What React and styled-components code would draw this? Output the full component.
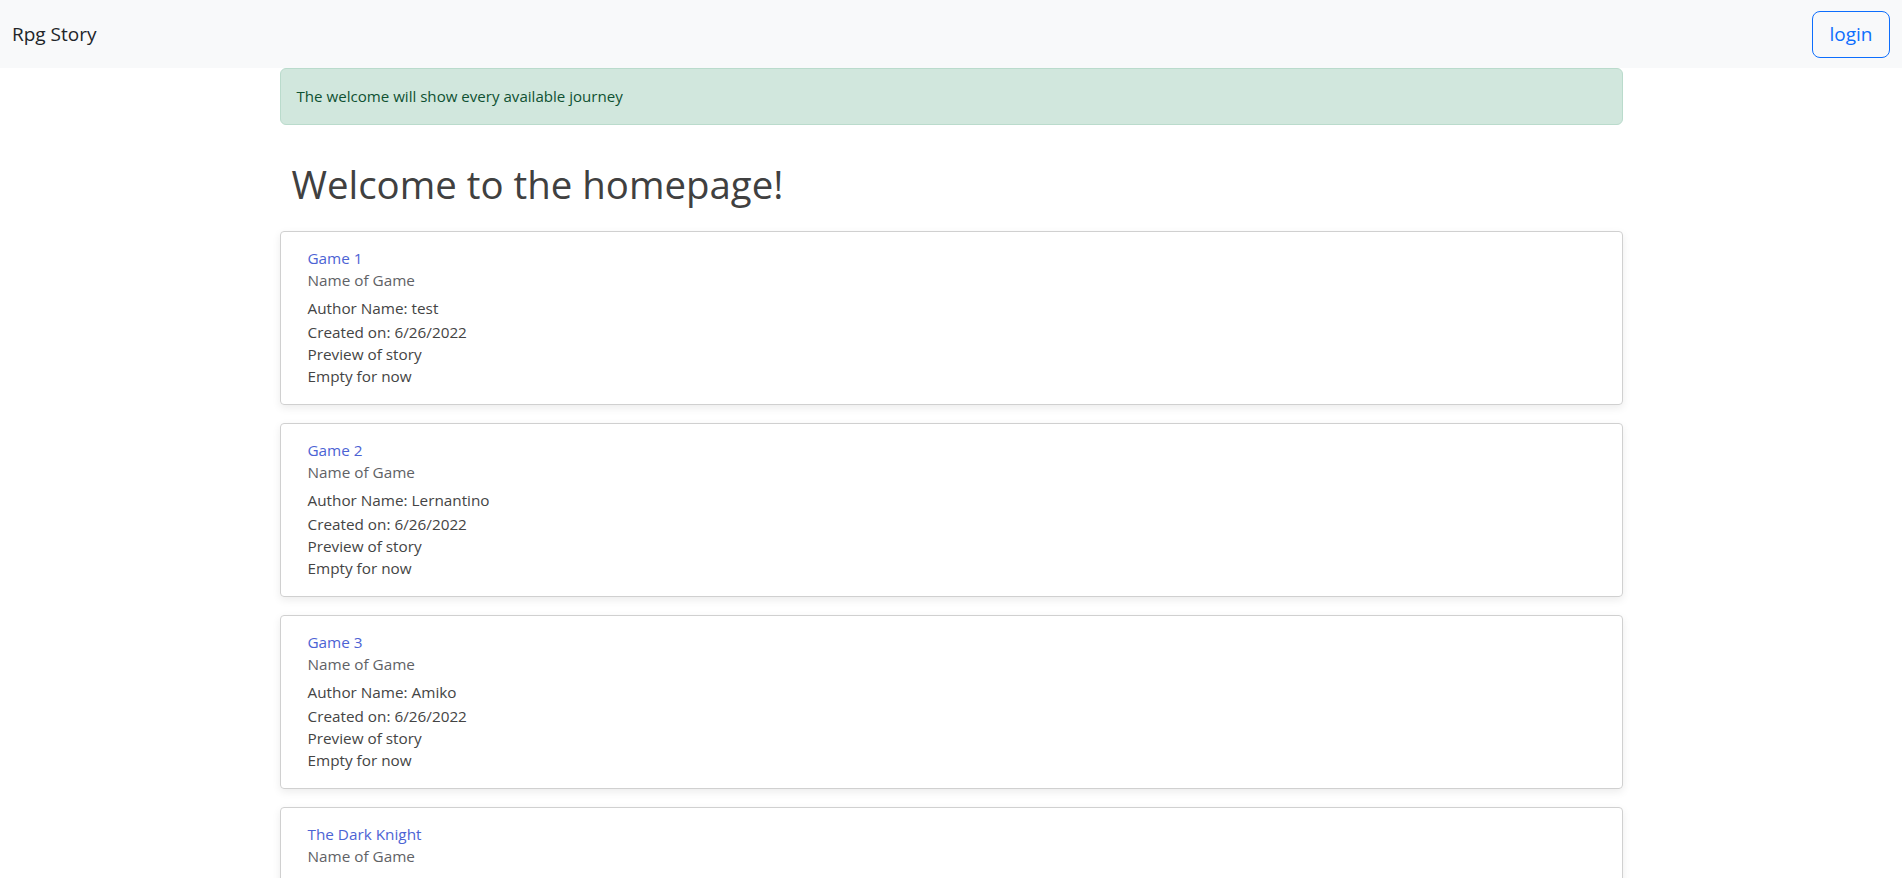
import React from 'react';
import styled, { createGlobalStyle } from 'styled-components';

const GlobalStyle = createGlobalStyle`
  body {
    margin: 0;
    background: #ffffff;
    font-family: "Open Sans", "Noto Sans", Arial, sans-serif;
    color: #444444;
  }
`;

/**
 *  Styled Components
 */
const NavBar = styled.nav`
  height: 68px;
  background: #f8f9fa;
  display: flex;
  align-items: center;
  justify-content: space-between;
  padding: 0 12px;
  box-sizing: border-box;
`;

const Brand = styled.span`
  font-size: 19px;
  color: #212529;
`;

const LoginButton = styled.button`
  width: 78px;
  height: 47px;
  font-family: inherit;
  font-size: 19px;
  color: #0d6efd;
  background: transparent;
  border: 1px solid #0d6efd;
  border-radius: 8px;
  cursor: pointer;
`;

const Container = styled.main`
  width: 1343px;
  margin: 0 auto;
`;

const Alert = styled.div`
  background: #d1e7dd;
  border: 1px solid #badbcc;
  border-radius: 6px;
  color: #0f5132;
  font-size: 15.1px;
  padding: 16px 16px;
  line-height: 23px;
`;

const Heading = styled.h1`
  font-size: 38.4px;
  font-weight: 400;
  color: #404040;
  margin: 35px 0 23px 12px;
  line-height: 48px;
`;

const CardList = styled.div`
  display: flex;
  flex-direction: column;
  gap: 18px;
`;

const Card = styled.div`
  border: 1px solid #d0d0d0;
  border-radius: 4px;
  box-shadow: 0 3px 8px rgba(0, 0, 0, 0.08);
  padding: 15px 27px 17px;
  font-size: 15.3px;
  line-height: 22px;
`;

const CardTitle = styled.div`
  color: #4c63d4;
`;

const CardSubtitle = styled.div`
  color: #5f6266;
  margin-bottom: 6px;
`;

const CardLine = styled.div`
  color: #444444;
  margin-bottom: ${props => (props.spaced ? '2px' : '0')};
`;

const games = [
  { title: 'Game 1', author: 'test' },
  { title: 'Game 2', author: 'Lernantino' },
  { title: 'Game 3', author: 'Amiko' },
  { title: 'The Dark Knight', author: 'Batman' },
];

function GameCard({ game }) {
  return (
    <Card>
      <CardTitle>{game.title}</CardTitle>
      <CardSubtitle>Name of Game</CardSubtitle>
      <CardLine spaced>Author Name: {game.author}</CardLine>
      <CardLine>Created on: 6/26/2022</CardLine>
      <CardLine>Preview of story</CardLine>
      <CardLine>Empty for now</CardLine>
    </Card>
  );
}

export default function App() {
  return (
    <>
      <GlobalStyle />
      <NavBar>
        <Brand>Rpg Story</Brand>
        <LoginButton>login</LoginButton>
      </NavBar>
      <Container>
        <Alert>The welcome will show every available journey</Alert>
        <Heading>Welcome to the homepage!</Heading>
        <CardList>
          {games.map(game => (
            <GameCard key={game.title} game={game} />
          ))}
        </CardList>
      </Container>
    </>
  );
}
